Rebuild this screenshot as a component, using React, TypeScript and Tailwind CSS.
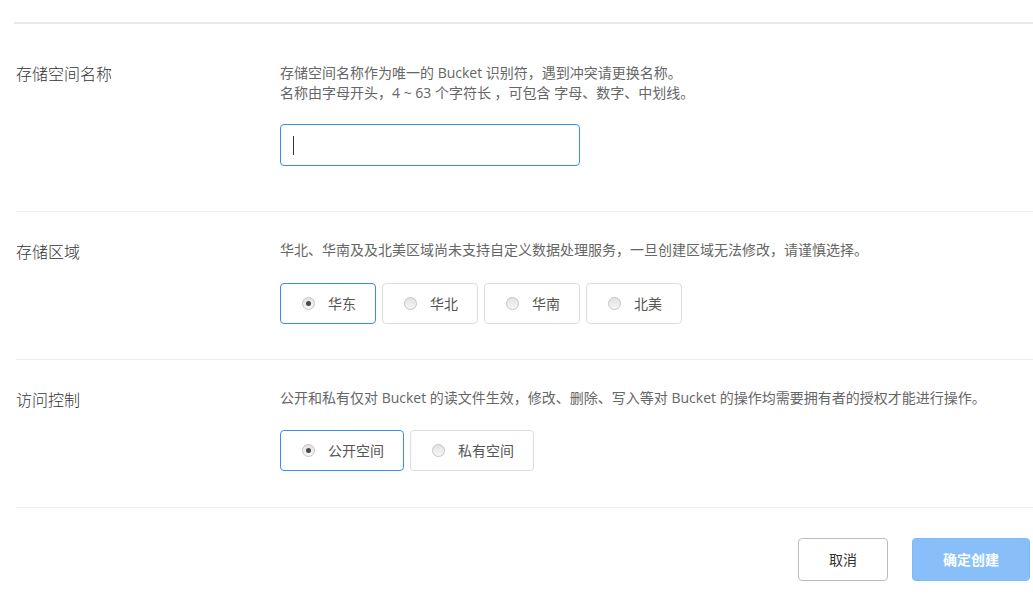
import React, { useState } from "react";

const font = { fontFamily: '"Open Sans", "Noto Sans CJK SC", sans-serif' };

function Radio({ checked }: { checked: boolean }) {
  return (
    <span className="flex h-[13px] w-[13px] items-center justify-center rounded-full border border-[#c4c4c4] bg-gradient-to-b from-[#e2e2e2] to-[#f7f7f7]">
      {checked && <span className="h-[5px] w-[5px] rounded-full bg-[#4a4a4a]" />}
    </span>
  );
}

function Choice({
  label,
  checked,
  width,
  onClick,
}: {
  label: string;
  checked: boolean;
  width: string;
  onClick: () => void;
}) {
  return (
    <button
      onClick={onClick}
      className={`flex h-[41px] ${width} items-center gap-[13px] rounded-[4px] border bg-white pl-[21px] text-sm text-[#555] ${
        checked ? "border-[#3a8ee6]" : "border-[#dcdee2]"
      }`}
    >
      <Radio checked={checked} />
      <span>{label}</span>
    </button>
  );
}

export default function App() {
  const [region, setRegion] = useState("华东");
  const [access, setAccess] = useState("公开空间");

  return (
    <div className="h-[593px] w-[1033px] overflow-hidden bg-white text-[#333]" style={font}>
      {/* top rule */}
      <div className="pl-[14px] pt-[22px]">
        <div className="h-[2px] bg-[#e6e9ed]" />
      </div>

      {/* Bucket name */}
      <div className="flex pb-[45px] pl-4 pt-[39px]">
        <div className="w-[264px] pt-px text-base font-light leading-5">存储空间名称</div>
        <div>
          <p className="text-sm leading-5 text-[#666]">
            存储空间名称作为唯一的 Bucket 识别符，遇到冲突请更换名称。
            <br />
            名称由字母开头，4 ~ 63 个字符长 ，可包含 字母、数字、中划线。
          </p>
          <div className="mt-[21px] flex h-[42px] w-[300px] items-center rounded-[4px] border border-[#3a8ee6] pl-3">
            <span className="h-[19px] w-px bg-[#333]" />
          </div>
        </div>
      </div>
      <div className="ml-4 h-px bg-[#ececec]" />

      {/* Region */}
      <div className="flex pb-[35px] pl-4 pt-[28px]">
        <div className="w-[264px] pt-[2px] text-base font-light leading-5">存储区域</div>
        <div>
          <p className="text-sm leading-5 text-[#666]">
            华北、华南及及北美区域尚未支持自定义数据处理服务，一旦创建区域无法修改，请谨慎选择。
          </p>
          <div className="mt-[23px] flex gap-[6px]">
            {["华东", "华北", "华南", "北美"].map((r) => (
              <Choice key={r} label={r} width="w-[96px]" checked={region === r} onClick={() => setRegion(r)} />
            ))}
          </div>
        </div>
      </div>
      <div className="ml-4 h-px bg-[#ececec]" />

      {/* Access control */}
      <div className="flex pb-[36px] pl-4 pt-[28px]">
        <div className="w-[264px] pt-[2px] text-base font-light leading-5">访问控制</div>
        <div>
          <p className="text-sm leading-5 text-[#666]">
            公开和私有仅对 Bucket 的读文件生效，修改、删除、写入等对 Bucket 的操作均需要拥有者的授权才能进行操作。
          </p>
          <div className="mt-[22px] flex gap-[6px]">
            {["公开空间", "私有空间"].map((a) => (
              <Choice key={a} label={a} width="w-[124px]" checked={access === a} onClick={() => setAccess(a)} />
            ))}
          </div>
        </div>
      </div>
      <div className="ml-4 h-px bg-[#ececec]" />

      {/* Footer */}
      <div className="flex justify-end gap-6 pr-[3px] pt-[30px]">
        <button className="h-[43px] w-[90px] rounded-[4px] border border-[#bcbcbc] bg-white text-sm text-[#333]">
          取消
        </button>
        <button className="h-[43px] w-[118px] rounded-[4px] border border-[#7fb9f6] bg-[#88bff9] text-sm font-semibold text-white">
          确定创建
        </button>
      </div>
    </div>
  );
}
